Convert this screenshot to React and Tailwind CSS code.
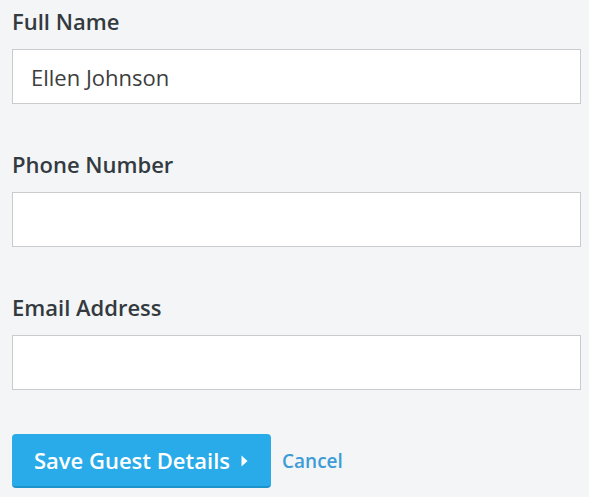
import React from "react";

const Field = ({ label, value, className = "" }) => (
  <div className={className}>
    <label className="block text-[22px] leading-[30px] font-semibold text-[#333a40] mb-[13px]">
      {label}
    </label>
    <input
      type="text"
      defaultValue={value}
      className="block w-full h-[55px] bg-white border border-[#c9cbcd] px-[18px] text-[22px] text-[#3d3d3d] outline-none"
    />
  </div>
);

export default function App() {
  return (
    <div
      className="min-h-screen bg-[#f4f5f7] pl-3 pr-2 pt-[6px]"
      style={{ fontFamily: '"Open Sans", "Noto Sans", sans-serif' }}
    >
      <Field label="Full Name" value="Ellen Johnson" />
      <Field label="Phone Number" value="" className="mt-[45px]" />
      <Field label="Email Address" value="" className="mt-[45px]" />

      <div className="mt-[44px] flex items-center gap-[11px]">
        <button className="flex items-center gap-[11px] h-[54px] w-[259px] pl-[22px] rounded-[4px] bg-[#28abe8] border-b-2 border-[#1d93cc] text-white text-[22px] font-semibold">
          Save Guest Details
          <svg width="7" height="12" viewBox="0 0 7 12" className="mt-[1px]">
            <path d="M0.5 0.5 L6.5 6 L0.5 11.5 Z" fill="white" />
          </svg>
        </button>
        <a href="#" className="text-[19px] font-semibold text-[#3d9bd6]">
          Cancel
        </a>
      </div>
    </div>
  );
}
